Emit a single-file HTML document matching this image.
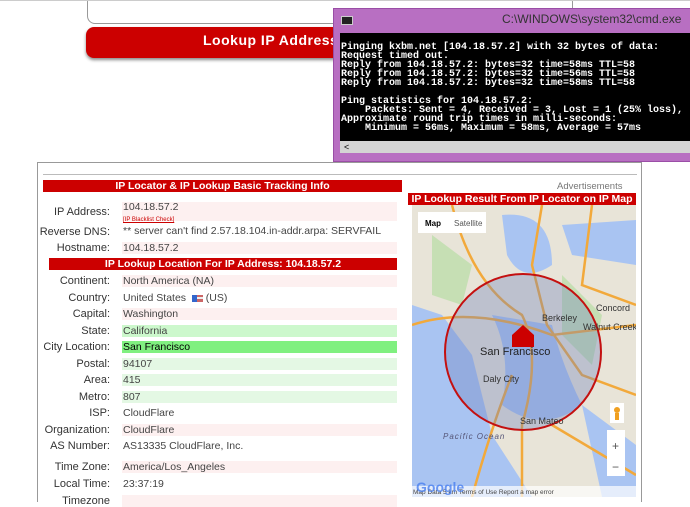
<!DOCTYPE html>
<html><head><meta charset="utf-8"><style>
*{margin:0;padding:0;box-sizing:border-box}
body{width:690px;height:500px;overflow:hidden;background:#fff;position:relative;font-family:"Liberation Sans",sans-serif}
.abs{position:absolute}
.lbl{position:absolute;width:90px;left:20px;text-align:right;font-size:11px;color:#333;line-height:12px}
.val{position:absolute;left:122px;width:275px;height:12px;font-size:10.5px;color:#444;padding-left:1px;line-height:13px}
.pk{background:#fdf0f0}
.hd{position:absolute;background:#cc0000;color:#fff;font-weight:bold;font-size:10.5px;text-align:center;line-height:12px;height:12px;white-space:nowrap;overflow:hidden}
.cmd{font-family:"Liberation Mono",monospace;font-size:10px;line-height:9px;color:#fff;white-space:pre;font-weight:bold}
</style></head><body>
<div class="abs" style="left:87px;top:-6px;width:486px;height:30px;border:1px solid #999;border-radius:8px;background:#fff"></div>
<div class="abs" style="left:0;top:0;width:690px;height:1px;background:#ccc"></div>
<div class="abs" style="left:86px;top:27px;width:400px;height:31px;background:#cc0000;border-radius:8px;box-shadow:0 2px 3px #888;color:#fff;font-weight:bold;font-size:14px;line-height:27px;padding-left:117px;letter-spacing:0.5px">Lookup IP Address</div>
<!-- cmd -->
<div class="abs" style="left:333px;top:8px;width:360px;height:154px;background:#b86fc2;border:1px solid #9a4ea6"></div>
<div class="abs" style="left:341px;top:16px;width:12px;height:9px;background:#222;border:1px solid #ccc"></div>
<div class="abs" style="left:502px;top:12px;font-size:12px;color:#333">C:\WINDOWS\system32\cmd.exe</div>
<div class="abs" style="left:340px;top:33px;width:350px;height:108px;background:#000"></div>
<div class="abs cmd" style="left:341px;top:43px">Pinging kxbm.net [104.18.57.2] with 32 bytes of data:
Request timed out.
Reply from 104.18.57.2: bytes=32 time=58ms TTL=58
Reply from 104.18.57.2: bytes=32 time=56ms TTL=58
Reply from 104.18.57.2: bytes=32 time=58ms TTL=58

Ping statistics for 104.18.57.2:
    Packets: Sent = 4, Received = 3, Lost = 1 (25% loss),
Approximate round trip times in milli-seconds:
    Minimum = 56ms, Maximum = 58ms, Average = 57ms</div>
<div class="abs" style="left:340px;top:141px;width:350px;height:12px;background:#d4d4d4;font-size:9px;padding-left:4px;line-height:12px">&lt;</div>
<!-- main panel -->
<div class="abs" style="left:37px;top:162px;width:605px;height:340px;border:1px solid #999;border-bottom:none"></div>
<div class="abs" style="left:43px;top:174px;width:594px;height:1px;background:#bbb"></div>
<div class="hd" style="left:43px;top:180px;width:359px">IP Locator &amp; IP Lookup Basic Tracking Info</div>
<div class="hd" style="left:49px;top:258px;width:348px">IP Lookup Location For IP Address: 104.18.57.2</div>

<div class="lbl" style="top:206px">IP Address:</div>
<div class="val pk" style="top:202px;height:19px;line-height:11px">104.18.57.2<br><span style="font-size:6px;color:#c00;text-decoration:underline">[IP Blacklist Check]</span></div>
<div class="lbl" style="top:226px">Reverse DNS:</div>
<div class="val" style="top:225px">** server can't find 2.57.18.104.in-addr.arpa: SERVFAIL</div>
<div class="lbl" style="top:242px">Hostname:</div>
<div class="val pk" style="top:242px">104.18.57.2</div>

<div class="lbl" style="top:275px">Continent:</div><div class="val pk" style="top:275px">North America (NA)</div>
<div class="lbl" style="top:292px">Country:</div><div class="val" style="top:292px">United States &nbsp;<span style="display:inline-block;width:11px;height:7px;background:linear-gradient(#c66 0 30%,#eee 30% 60%,#c66 60%);vertical-align:middle;border-left:5px solid #36c"></span> (US)</div>
<div class="lbl" style="top:308px">Capital:</div><div class="val pk" style="top:308px">Washington</div>
<div class="lbl" style="top:325px">State:</div><div class="val" style="top:325px;background:#ccf8cc">California</div>
<div class="lbl" style="top:341px">City Location:</div><div class="val" style="top:341px;background:#80f080;color:#000">San Francisco</div>
<div class="lbl" style="top:358px">Postal:</div><div class="val" style="top:358px;background:#e4f8e4">94107</div>
<div class="lbl" style="top:374px">Area:</div><div class="val" style="top:374px;background:#e4f8e4">415</div>
<div class="lbl" style="top:391px">Metro:</div><div class="val" style="top:391px;background:#e4f8e4">807</div>
<div class="lbl" style="top:407px">ISP:</div><div class="val" style="top:407px">CloudFlare</div>
<div class="lbl" style="top:424px">Organization:</div><div class="val pk" style="top:424px">CloudFlare</div>
<div class="lbl" style="top:440px">AS Number:</div><div class="val" style="top:440px">AS13335 CloudFlare, Inc.</div>
<div class="lbl" style="top:461px">Time Zone:</div><div class="val pk" style="top:461px">America/Los_Angeles</div>
<div class="lbl" style="top:478px">Local Time:</div><div class="val" style="top:478px">23:37:19</div>
<div class="lbl" style="top:495px">Timezone</div><div class="val pk" style="top:495px"></div>

<!-- map side -->
<div class="abs" style="left:557px;top:181px;font-size:9.5px;color:#777">Advertisements</div>
<div class="hd" style="left:408px;top:193px;width:228px">IP Lookup Result From IP Locator on IP Map</div>
<svg class="abs" style="left:412px;top:205px" width="224" height="292" viewBox="0 0 224 292">
<rect width="224" height="292" fill="#e8e4d8"/>
<path d="M0 100 L0 292 L120 292 L80 230 L60 150 L30 110 Z" fill="#a9c4f2"/>
<path d="M90 10 Q140 5 140 60 Q110 80 95 50 Z" fill="#a9c4f2"/>
<path d="M150 20 L224 15 L224 60 L160 50 Z" fill="#a9c4f2"/>
<path d="M80 110 Q100 150 90 200 Q130 230 170 200 Q150 160 140 120 Z" fill="#a9c4f2"/>
<path d="M170 200 L224 240 L224 292 L190 292 Z" fill="#a9c4f2"/>
<path d="M20 30 L60 60 L50 100 L20 90 Z" fill="#c6dfb4"/>
<path d="M150 70 L190 110 L180 160 L150 130 Z" fill="#c6dfb4"/>
<g stroke="#f2a93b" stroke-width="2.5" fill="none">
<path d="M40 0 Q60 80 110 110 Q130 150 110 220 L110 292"/>
<path d="M130 0 L120 60 L135 120 L170 170 L224 190"/>
<path d="M0 120 Q60 100 140 130 L224 120"/>
<path d="M60 292 Q80 220 100 170"/>
<path d="M180 0 L170 80 L224 100"/>
<path d="M140 220 L224 270"/>
</g>
<circle cx="111" cy="147" r="78" fill="rgba(110,130,190,0.35)" stroke="#c41010" stroke-width="2"/>
<rect x="6" y="7" width="68" height="21" fill="#fff"/>
<text x="13" y="21" font-size="8" font-family="Liberation Sans" font-weight="bold">Map</text>
<text x="42" y="21" font-size="8" font-family="Liberation Sans" fill="#555">Satellite</text>
<text x="68" y="150" font-size="11" font-family="Liberation Sans" fill="#222">San Francisco</text>
<text x="71" y="177" font-size="9" font-family="Liberation Sans" fill="#333">Daly City</text>
<text x="130" y="116" font-size="9" font-family="Liberation Sans" fill="#333">Berkeley</text>
<text x="171" y="125" font-size="9" font-family="Liberation Sans" fill="#333">Walnut Creek</text>
<text x="184" y="106" font-size="9" font-family="Liberation Sans" fill="#333">Concord</text>
<text x="108" y="219" font-size="9" font-family="Liberation Sans" fill="#333">San Mateo</text>
<text x="31" y="234" font-size="8" font-family="Liberation Sans" fill="#557" font-style="italic" letter-spacing="1">Pacific Ocean</text>
<path d="M100 130 L111 120 L122 130 L122 142 L100 142 Z" fill="#c00"/>
<rect x="195" y="225" width="18" height="46" fill="#fff"/>
<text x="200" y="245" font-size="12" font-family="Liberation Sans" fill="#555">+</text>
<text x="200" y="266" font-size="12" font-family="Liberation Sans" fill="#555">−</text>
<rect x="198" y="198" width="14" height="20" fill="#fff"/><circle cx="205" cy="205" r="3" fill="#f0a020"/><rect x="203" y="208" width="4" height="7" fill="#f0a020"/>
<rect x="0" y="281" width="224" height="11" fill="rgba(255,255,255,0.7)"/>
<text x="1" y="289" font-size="6.5" font-family="Liberation Sans" fill="#444">Map Data    5 km          Terms of Use    Report a map error</text>
<text x="4" y="287" font-size="14" font-family="Liberation Sans" fill="#4a80f0" font-weight="bold" opacity=".8">Google</text>
</svg>
</body></html>
